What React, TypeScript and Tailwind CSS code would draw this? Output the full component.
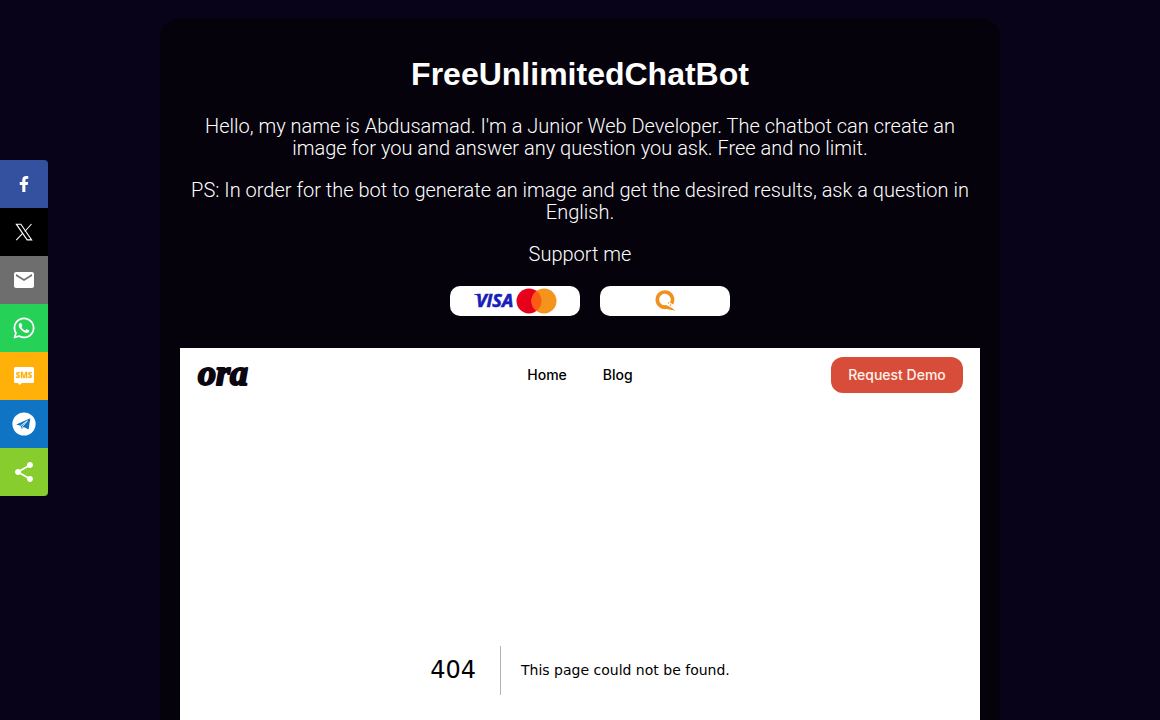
import type { ReactNode } from 'react';
import { FaFacebookF, FaWhatsapp } from 'react-icons/fa';
import { MdEmail, MdShare } from 'react-icons/md';

function XIcon() {
  return (
    <svg viewBox="0 0 24 24" className="size-5" fill="none" stroke="currentColor" strokeWidth="1.3">
      <path d="M2.8 2.6h5.4l13 18.8h-5.4z" />
      <path d="M21 2.4l-8 9M10.6 13.4l-7.9 8.4" />
    </svg>
  );
}

function SmsIcon() {
  return (
    <svg viewBox="0 0 20 20" className="size-5">
      <path d="M1.5 1h17A1.5 1.5 0 0 1 20 2.500v13a1.500 1.500 0 0 1-1.500 1.500H8l-2.500 2L4 17H1.500A1.500 1.500 0 0 1 0 15.500v-13A1.500 1.500 0 0 1 1.500 1z" fill="#fff" />
      <text x="10" y="12" textAnchor="middle" fontFamily="Open Sans, sans-serif" fontWeight="700" fontSize="8" fill="#ffb10a" stroke="#ffb10a" strokeWidth="0.3">
        SMS
      </text>
    </svg>
  );
}

function TelegramIcon() {
  return (
    <svg viewBox="0 0 24 24" className="size-6">
      <circle cx="12" cy="12" r="11.600" fill="#fff" />
      <path d="M4.200 12.400L18.300 6.200 16.600 17.600l-4.900-2.700-2.300 3.100-.7-4.300z" fill="#0f74c4" />
      <path d="M8.800 13.600l6.500-4.800-4.900 5.900-1 3.200" fill="none" stroke="#fff" strokeWidth="0.9" />
    </svg>
  );
}

const shares: { label: string; color: string; icon: ReactNode }[] = [
  { label: 'Facebook', color: 'bg-[#3451a0]', icon: <FaFacebookF className="size-4" /> },
  { label: 'X', color: 'bg-black', icon: <XIcon /> },
  { label: 'Email', color: 'bg-[#6e6e6e]', icon: <MdEmail className="size-6" /> },
  { label: 'WhatsApp', color: 'bg-[#26d158]', icon: <FaWhatsapp className="size-6" /> },
  { label: 'SMS', color: 'bg-[#ffb10a]', icon: <SmsIcon /> },
  { label: 'Telegram', color: 'bg-[#0f74c4]', icon: <TelegramIcon /> },
  { label: 'Share', color: 'bg-[#86cd2d]', icon: <MdShare className="size-6" /> },
];

function ShareBar() {
  return (
    <div className="fixed top-40 left-0 flex flex-col overflow-hidden rounded-r">
      {shares.map((item) => (
        <button
          key={item.label}
          type="button"
          aria-label={item.label}
          className={`flex size-12 items-center justify-center text-white ${item.color}`}
        >
          {item.icon}
        </button>
      ))}
    </div>
  );
}

function CardLogo() {
  return (
    <svg viewBox="0 0 84 26" className="h-[26px] w-[84px]">
      <text x="3" y="19" fontFamily="Open Sans, sans-serif" fontWeight="700" fontStyle="italic" fontSize="18" fill="#1620b8" stroke="#1620b8" strokeWidth="0.6">
        VISA
      </text>
      <path d="M1 6h5l2 4c-2-2-4-3-7-3.500z" fill="#1620b8" />
      <circle cx="56" cy="13" r="12.500" fill="#e6001a" />
      <circle cx="71" cy="13" r="12.500" fill="#f3941c" />
      <path d="M63.500 3a12.500 12.500 0 0 1 0 20 12.500 12.500 0 0 1 0-20z" fill="#fb5b12" />
    </svg>
  );
}

function QiwiLogo() {
  return (
    <svg viewBox="0 0 22 22" className="size-[22px]">
      <path d="M17.500 13.500A7.600 7.600 0 1 0 13 17" fill="none" stroke="#f0901e" strokeWidth="3.600" />
      <path d="M9 15.500c3-.8 5 .2 7 1.500 1.800 1.200 3.600 1.600 5 4-3.500-1.600-6.500-1.200-9.500-2.500z" fill="#f0901e" />
      <circle cx="14.500" cy="13" r="0.700" fill="#f0901e" />
      <circle cx="16.500" cy="15" r="0.800" fill="#f0901e" />
    </svg>
  );
}

function OraLogo() {
  return (
    <svg viewBox="0 0 60 36" className="h-9 w-[60px]" role="img" aria-label="ora">
      <text
        x="1"
        y="28"
        fontFamily="Liberation Serif, serif"
        fontWeight="700"
        fontStyle="italic"
        fontSize="36"
        fill="#0c0610"
        stroke="#0c0610"
        strokeWidth="2"
        strokeLinejoin="round"
      >
        ora
      </text>
    </svg>
  );
}

function BotFrame() {
  return (
    <section className="mt-8 bg-white text-black">
      <header className="grid grid-cols-3 items-center px-[17px] py-[9px] font-['Inter',sans-serif] text-sm font-medium">
        <a href="#ora">
          <OraLogo />
        </a>
        <nav className="flex justify-center gap-9">
          <a href="#home">Home</a>
          <a href="#blog">Blog</a>
        </nav>
        <button
          type="button"
          className="h-9 w-[132px] justify-self-end rounded-xl bg-[#d84c3a] text-[#fff3ea]"
        >
          Request Demo
        </button>
      </header>
      <div className="flex h-[536px] items-center justify-center font-['DejaVu_Sans',sans-serif]">
        <h2 className="mr-5 border-r border-black/30 pr-6 text-2xl leading-[49px]">404</h2>
        <p className="text-sm">This page could not be found.</p>
      </div>
    </section>
  );
}

export default function App() {
  return (
    <div className="min-h-screen bg-[#09031a] px-5 py-[18px] font-['Liberation_Sans',Arial,sans-serif] text-white">
      <main className="mx-auto max-w-[840px] rounded-[20px] bg-[#05020b] px-5 pt-9 pb-5">
        <div className="text-center">
          <h1 className="text-[32px] leading-10 font-bold">FreeUnlimitedChatBot</h1>
          <div className="mt-[21px] flex flex-col gap-5 font-['Roboto',sans-serif] text-xl leading-[22px] font-light">
            <p>
              Hello, my name is Abdusamad. I'm a Junior Web Developer. The chatbot can create an
              image for you and answer any question you ask. Free and no limit.
            </p>
            <p>
              PS: In order for the bot to generate an image and get the desired results, ask a
              question in English.
            </p>
            <p>Support me</p>
          </div>
          <div className="mt-[21px] flex justify-center">
            <a
              href="#card"
              aria-label="Visa and Mastercard"
              className="ml-5 flex h-[30px] w-[130px] items-center justify-center rounded-[10px] bg-white"
            >
              <CardLogo />
            </a>
            <a
              href="#qiwi"
              aria-label="Qiwi"
              className="ml-5 flex h-[30px] w-[130px] items-center justify-center rounded-[10px] bg-white"
            >
              <QiwiLogo />
            </a>
          </div>
        </div>
        <BotFrame />
      </main>
      <ShareBar />
    </div>
  );
}
